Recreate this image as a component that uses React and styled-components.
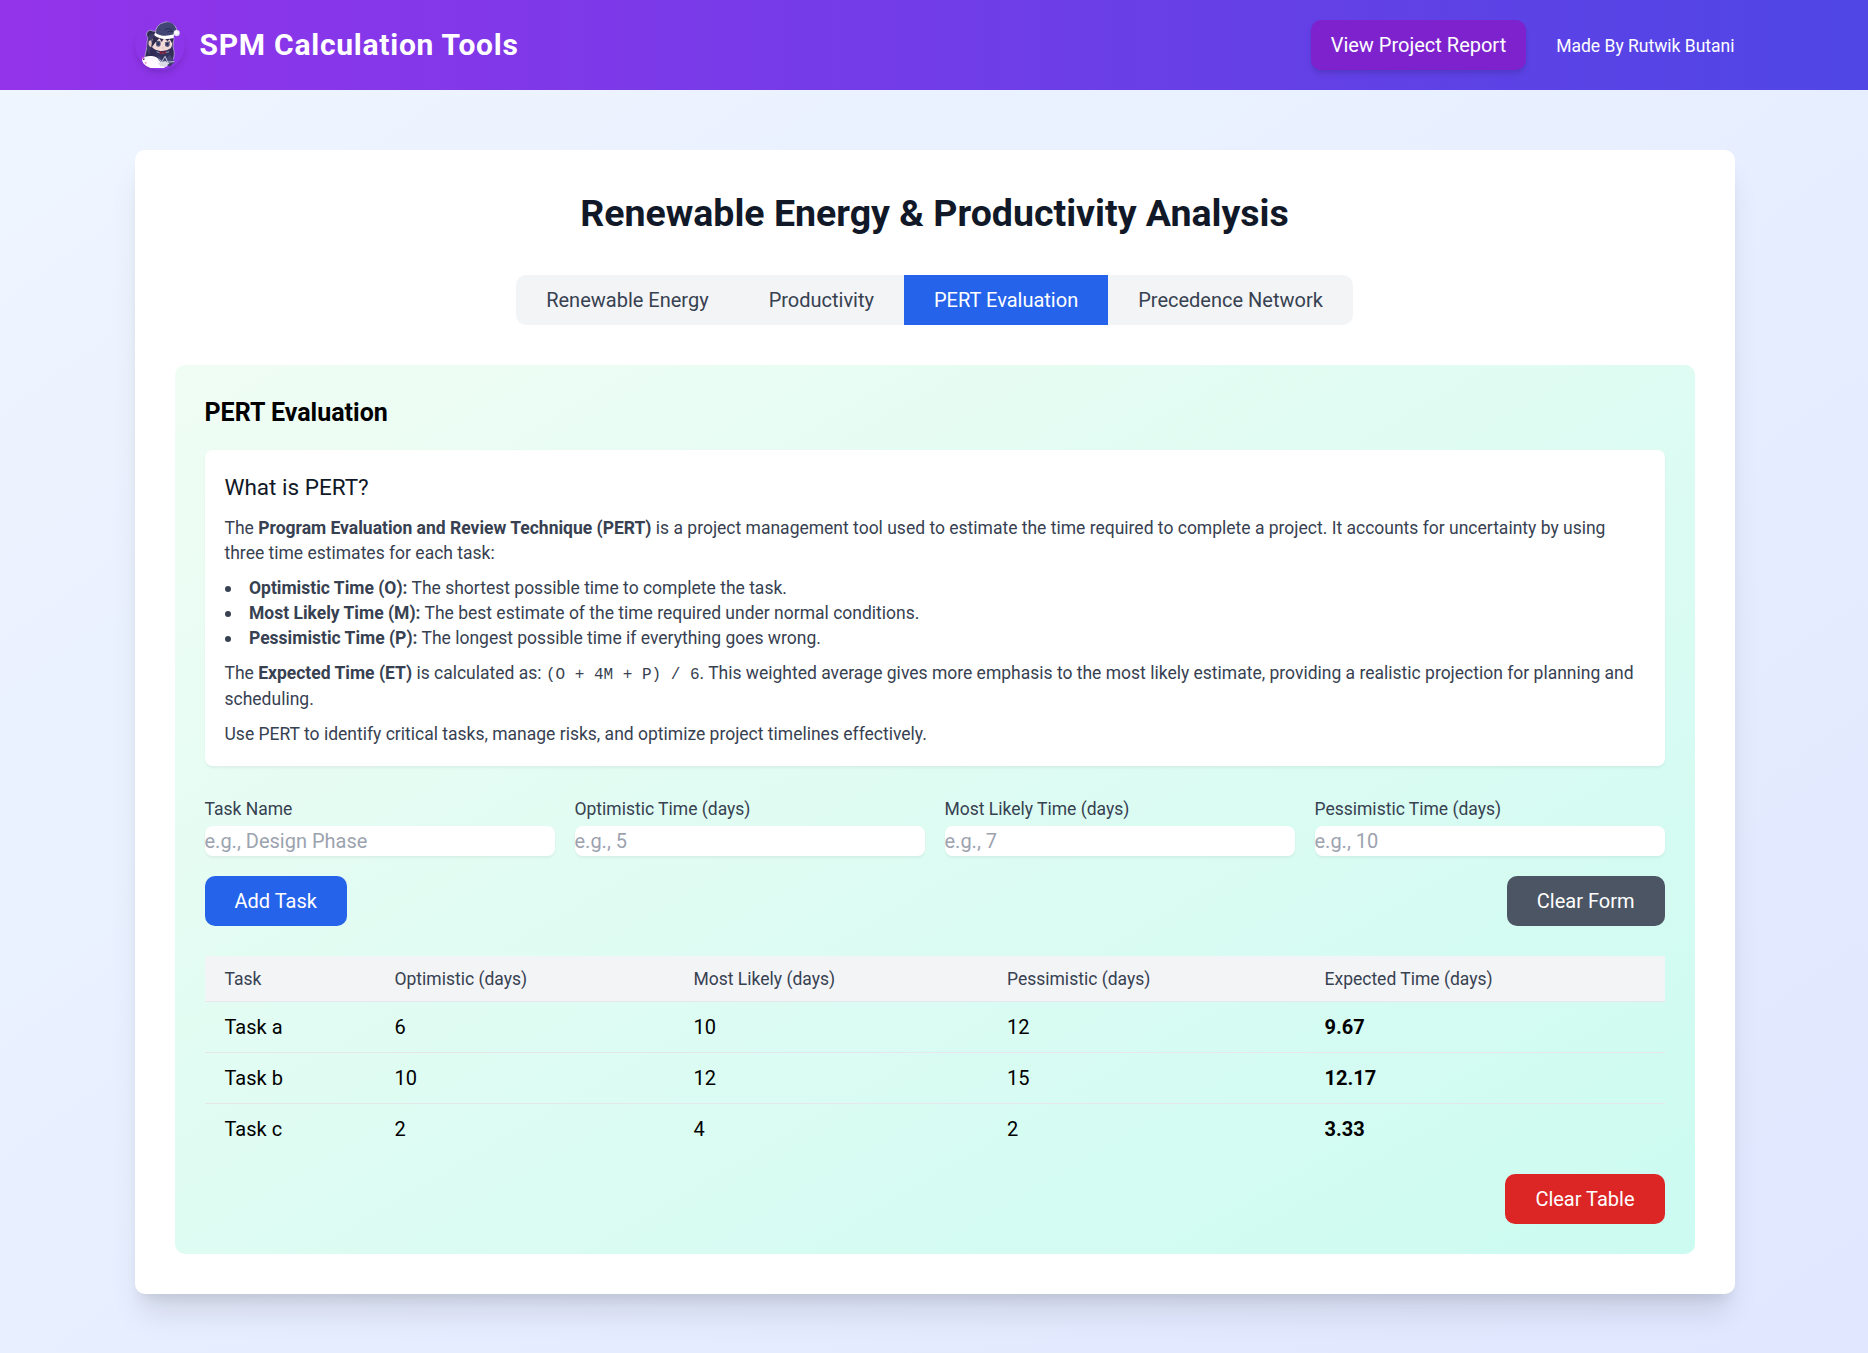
import React from "react";
import styled, { createGlobalStyle } from "styled-components";

const GlobalStyle = createGlobalStyle`
  *, *::before, *::after { box-sizing: border-box; }
  body {
    margin: 0;
    font-family: Roboto, "Liberation Sans", sans-serif;
    font-size: 20px;
    line-height: 30px;
    color: #000;
  }
  h1, h2, h3, p, ul { margin: 0; padding: 0; }
  button, input { font: inherit; border: 0; margin: 0; }
`;

const Page = styled.div`
  min-height: 1353px;
  height: 100vh;
  overflow: hidden;
  background: linear-gradient(to bottom right, #eff6ff, #e0e7ff);
`;

const Header = styled.header`
  display: flex;
  justify-content: center;
  padding: 20px 0 20px 1px;
  background: linear-gradient(to right, #9333ea, #4f46e5);
  color: #fff;
`;

const HeaderInner = styled.div`
  display: flex;
  align-items: center;
  justify-content: space-between;
  width: 1600px;
  height: 50px;
`;

const Brand = styled.div`
  display: flex;
  align-items: center;
  gap: 15px;
`;

const LogoFrame = styled.div`
  width: 50px;
  height: 50px;
  border-radius: 50%;
  overflow: hidden;
  box-shadow: 0 5px 7.5px -1px rgba(0, 0, 0, 0.1), 0 2.5px 5px -2.5px rgba(0, 0, 0, 0.1);
  svg { display: block; }
`;

const BrandName = styled.span`
  font-size: 30px;
  line-height: 40px;
  font-weight: 700;
  letter-spacing: 0.75px;
`;

const HeaderActions = styled.div`
  display: flex;
  align-items: center;
  gap: 30px;
`;

const ReportLink = styled.a`
  padding: 10px 20px;
  border-radius: 10px;
  background: #7e22ce;
  box-shadow: 0 5px 7.5px -1px rgba(0, 0, 0, 0.1), 0 2.5px 5px -2.5px rgba(0, 0, 0, 0.1);
`;

const Credit = styled.span`
  padding-top: 2px;
  font-size: 17.5px;
  line-height: 25px;
`;

const Main = styled.main`
  display: flex;
  justify-content: center;
  padding: 60px 0 60px 1px;
`;

const Card = styled.section`
  width: 1600px;
  padding: 40px;
  border-radius: 10px;
  background: #fff;
  box-shadow: 0 25px 31.25px -6.25px rgba(0, 0, 0, 0.1), 0 10px 12.5px -7.5px rgba(0, 0, 0, 0.1);
`;

const Title = styled.h1`
  margin-bottom: 39px;
  padding-top: 1px;
  font-size: 37.5px;
  line-height: 45px;
  font-weight: 700;
  text-align: center;
  color: #111827;
`;

const TabRow = styled.div`
  display: flex;
  justify-content: center;
  margin-bottom: 40px;
`;

const TabList = styled.div`
  display: flex;
  overflow: hidden;
  border-radius: 10px;
  background: #f3f4f6;
`;

const Tab = styled.button`
  padding: 10px 30px;
  background: ${(p) => (p.$active ? "#2563eb" : "transparent")};
  color: ${(p) => (p.$active ? "#fff" : "#374151")};
`;

const Panel = styled.div`
  padding: 30px;
  border-radius: 10px;
  background: linear-gradient(to bottom right, #f0fdf4, #ccfbf1);
`;

const PanelTitle = styled.h2`
  margin-bottom: 20px;
  font-size: 25px;
  line-height: 35px;
  font-weight: 700;
`;

const Info = styled.div`
  display: flex;
  flex-direction: column;
  gap: 10px;
  margin-bottom: 30px;
  padding: 20px 20px 19px;
  border-radius: 7.5px;
  background: #fff;
  box-shadow: 0 1.25px 2.5px rgba(0, 0, 0, 0.05);
  font-size: 17.5px;
  line-height: 25px;
  color: #374151;
`;

const InfoTitle = styled.h3`
  margin-bottom: 1px;
  font-size: 22.5px;
  line-height: 35px;
  font-weight: 400;
  color: #111827;
`;

const BulletList = styled.ul`
  list-style: none;
`;

const Bullet = styled.li`
  &::before {
    content: "";
    display: inline-block;
    width: 6px;
    height: 6px;
    margin-right: 18.5px;
    border-radius: 50%;
    background: #374151;
    vertical-align: 2px;
  }
`;

const FormulaText = styled.p`
  line-height: 25.5px;
`;

const Formula = styled.code`
  font-family: "Liberation Mono", monospace;
  font-size: 16px;
  line-height: 1;
`;

const Fields = styled.div`
  display: grid;
  grid-template-columns: repeat(4, 1fr);
  gap: 20px;
`;

const Field = styled.label`
  display: flex;
  flex-direction: column;
  gap: 4px;
  padding-top: 1px;
  font-size: 17.5px;
  line-height: 25px;
  color: #374151;
`;

const Input = styled.input`
  width: 100%;
  height: 30px;
  padding: 0;
  border-radius: 7.5px;
  background: #fff;
  box-shadow: 0 1.25px 2.5px rgba(0, 0, 0, 0.05);
  font-size: 20px;
  line-height: 30px;
  &::placeholder { color: #9ca3af; opacity: 1; }
`;

const Actions = styled.div`
  display: flex;
  justify-content: ${(p) => (p.$end ? "flex-end" : "space-between")};
  margin-top: 20px;
`;

const tones = { primary: "#2563eb", neutral: "#4b5563", danger: "#dc2626" };

const Button = styled.button`
  padding: 10px 30px;
  border-radius: 10px;
  background: ${(p) => tones[p.$tone]};
  color: #fff;
`;

const Table = styled.table`
  width: 100%;
  margin-top: 30px;
  table-layout: fixed;
  border-collapse: separate;
  border-spacing: 0;
`;

const Col = styled.col`
  width: ${(p) => p.$width};
`;

const HeadCell = styled.th`
  padding: 11px 20px 9px;
  border-bottom: 1px solid #e5e7eb;
  background: #f3f4f6;
  font-size: 17.5px;
  line-height: 25px;
  font-weight: 400;
  text-align: left;
  color: #374151;
`;

const Row = styled.tr`
  &:not(:last-child) td { border-bottom: 1px solid #e5e7eb; }
`;

const Cell = styled.td`
  padding: 10px 20px;
  font-weight: ${(p) => (p.$strong ? 700 : 400)};
`;

function Logo() {
  return (
    <svg width="50" height="50" viewBox="15 30 150 150">
      <g stroke="#c9c2dc" strokeWidth="2" strokeLinejoin="round">
        <path d="M68 63Q57 56 51 68Q46 76 54 83Q50 93 51 109L44 142Q48 151 61 147L128 150Q137 134 129 111L132 83L111 69Z" fill="#302c55" />
        <path d="M76 73Q76 43 103 37Q123 30 135 47Q141 55 140 66L128 78Q107 84 76 73Z" fill="#414674" />
      </g>
      <path d="M58 75Q67 69 77 72L68 101Q59 112 60 134Q50 129 51 112Z" fill="#403c68" />
      <path d="M66 87Q82 79 97 81L126 86Q130 104 122 115Q109 125 86 122Q67 118 63 104Z" fill="#f3d9d7" />
      <path d="M62 91Q54 91 56 103Q58 113 68 112Z" fill="#e9c5c1" />
      <path d="M68 83Q79 70 105 79L130 83L127 101L119 88L112 94L103 84L95 96L88 85L75 99L63 115Z" fill="#302c50" />
      <path d="M77 94L91 96M106 98L120 96" stroke="#292643" strokeWidth="3" />
      <ellipse cx="85" cy="101" rx="7" ry="9" fill="#53547c" />
      <ellipse cx="112" cy="103" rx="7" ry="8" fill="#53547c" />
      <path d="M82 97H88V105H82ZM109 99H115V106H109Z" fill="#282b50" />
      <path d="M96 114H101" stroke="#b78d97" strokeWidth="1.5" />
      <path d="M76 119Q94 128 119 120L130 151L113 164L76 160Z" fill="#34335d" />
      <path d="M80 125Q95 133 117 125" fill="none" stroke="#c7c7e2" strokeWidth="2" />
      <path d="M89 122L98 127L107 122L108 132L98 130L89 134Z" fill="#7f213d" />
      <path d="M83 136L101 151L120 135L134 158Q117 170 92 163Z" fill="#454674" />
      <path d="M82 145L96 155L105 139L113 156L133 155" fill="none" stroke="#c4c6df" strokeWidth="3" />
      <path d="M36 148Q46 136 66 138Q82 139 86 151L104 164L104 174H54Q38 165 36 148Z" fill="#fffaff" />
      <path d="M85 158L106 153L118 160L109 171L91 169Z" fill="#dad9e6" />
      <path d="M112 164L128 161L119 170Z" fill="#39375e" />
      <path d="M35 141L43 145L39 151ZM43 155L51 158L47 162Z" fill="#ed78ba" />
      <path d="M39 149L44 147" stroke="#37305a" strokeWidth="3" />
      <path d="M76 68Q97 84 132 73L131 84Q99 93 74 77Q71 71 76 68Z" fill="#fff" />
      <path d="M104 60Q115 51 128 61M112 66Q121 61 131 66" fill="none" stroke="#292d54" strokeWidth="3" />
      <circle cx="140" cy="69" r="9" fill="#efeff7" stroke="#c9c7d8" />
      <circle cx="138" cy="67" r="4" fill="#fff" />
    </svg>
  );
}

const tabs = ["Renewable Energy", "Productivity", "PERT Evaluation", "Precedence Network"];

const fields = [
  ["Task Name", "e.g., Design Phase"],
  ["Optimistic Time (days)", "e.g., 5"],
  ["Most Likely Time (days)", "e.g., 7"],
  ["Pessimistic Time (days)", "e.g., 10"],
];

const columns = [
  ["Task", "170px"],
  ["Optimistic (days)", "299px"],
  ["Most Likely (days)", "313.5px"],
  ["Pessimistic (days)", "317.5px"],
  ["Expected Time (days)", "auto"],
];

const tasks = [
  ["Task a", 6, 10, 12],
  ["Task b", 10, 12, 15],
  ["Task c", 2, 4, 2],
];

const expectedTime = (o, m, p) => ((o + 4 * m + p) / 6).toFixed(2);

export default function App() {
  return (
    <Page>
      <GlobalStyle />
      <Header>
        <HeaderInner>
          <Brand>
            <LogoFrame><Logo /></LogoFrame>
            <BrandName>SPM Calculation Tools</BrandName>
          </Brand>
          <HeaderActions>
            <ReportLink>View Project Report</ReportLink>
            <Credit>Made By Rutwik Butani</Credit>
          </HeaderActions>
        </HeaderInner>
      </Header>
      <Main>
        <Card>
          <Title>Renewable Energy &amp; Productivity Analysis</Title>
          <TabRow>
            <TabList>
              {tabs.map((t) => (
                <Tab key={t} $active={t === "PERT Evaluation"}>{t}</Tab>
              ))}
            </TabList>
          </TabRow>
          <Panel>
            <PanelTitle>PERT Evaluation</PanelTitle>
            <Info>
              <InfoTitle>What is PERT?</InfoTitle>
              <p>
                The <strong>Program Evaluation and Review Technique (PERT)</strong> is a project
                management tool used to estimate the time required to complete a project. It
                accounts for uncertainty by using three time estimates for each task:
              </p>
              <BulletList>
                <Bullet><strong>Optimistic Time (O):</strong> The shortest possible time to complete the task.</Bullet>
                <Bullet><strong>Most Likely Time (M):</strong> The best estimate of the time required under normal conditions.</Bullet>
                <Bullet><strong>Pessimistic Time (P):</strong> The longest possible time if everything goes wrong.</Bullet>
              </BulletList>
              <FormulaText>
                The <strong>Expected Time (ET)</strong> is calculated as:{" "}
                <Formula>(O + 4M + P) / 6</Formula>. This weighted average gives more emphasis to
                the most likely estimate, providing a realistic projection for planning and
                scheduling.
              </FormulaText>
              <p>Use PERT to identify critical tasks, manage risks, and optimize project timelines effectively.</p>
            </Info>
            <Fields>
              {fields.map(([label, hint]) => (
                <Field key={label}>
                  {label}
                  <Input placeholder={hint} />
                </Field>
              ))}
            </Fields>
            <Actions>
              <Button $tone="primary">Add Task</Button>
              <Button $tone="neutral">Clear Form</Button>
            </Actions>
            <Table>
              <colgroup>
                {columns.map(([name, width]) => <Col key={name} $width={width} />)}
              </colgroup>
              <thead>
                <tr>{columns.map(([name]) => <HeadCell key={name}>{name}</HeadCell>)}</tr>
              </thead>
              <tbody>
                {tasks.map(([name, o, m, p]) => (
                  <Row key={name}>
                    <Cell>{name}</Cell>
                    <Cell>{o}</Cell>
                    <Cell>{m}</Cell>
                    <Cell>{p}</Cell>
                    <Cell $strong>{expectedTime(o, m, p)}</Cell>
                  </Row>
                ))}
              </tbody>
            </Table>
            <Actions $end>
              <Button $tone="danger">Clear Table</Button>
            </Actions>
          </Panel>
        </Card>
      </Main>
    </Page>
  );
}
